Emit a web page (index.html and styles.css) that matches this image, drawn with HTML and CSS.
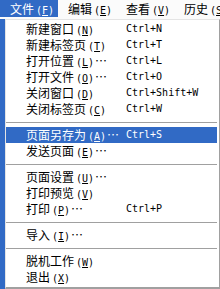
FILE: index.html
```html
<!DOCTYPE html>
<html>
<head>
<meta charset="utf-8">
<link rel="stylesheet" href="styles.css">
</head>
<body>
<div class="bar">
  <div class="top active">文件<span class="k">(<u>F</u>)</span></div>
  <div class="top">编辑<span class="k">(<u>E</u>)</span></div>
  <div class="top">查看<span class="k">(<u>V</u>)</span></div>
  <div class="top">历史<span class="k">(<u>S</u>)</span></div>
</div>
<div class="menu">
  <div class="item"><span class="lbl">新建窗口<span class="k">(<u>N</u>)</span></span><span class="sc">Ctrl+N</span></div>
  <div class="item"><span class="lbl">新建标签页<span class="k">(<u>T</u>)</span></span><span class="sc">Ctrl+T</span></div>
  <div class="item"><span class="lbl">打开位置<span class="k">(<u>L</u>)</span>…</span><span class="sc">Ctrl+L</span></div>
  <div class="item"><span class="lbl">打开文件<span class="k">(<u>O</u>)</span>…</span><span class="sc">Ctrl+O</span></div>
  <div class="item"><span class="lbl">关闭窗口<span class="k">(<u>D</u>)</span></span><span class="sc">Ctrl+Shift+W</span></div>
  <div class="item"><span class="lbl">关闭标签页<span class="k">(<u>C</u>)</span></span><span class="sc">Ctrl+W</span></div>
  <div class="sep"></div>
  <div class="item hl"><span class="lbl">页面另存为<span class="k">(<u>A</u>)</span>…</span><span class="sc">Ctrl+S</span></div>
  <div class="item"><span class="lbl">发送页面<span class="k">(<u>E</u>)</span>…</span></div>
  <div class="sep"></div>
  <div class="item"><span class="lbl">页面设置<span class="k">(<u>U</u>)</span>…</span></div>
  <div class="item"><span class="lbl">打印预览<span class="k">(<u>V</u>)</span></span></div>
  <div class="item"><span class="lbl">打印<span class="k">(<u>P</u>)</span>…</span><span class="sc">Ctrl+P</span></div>
  <div class="sep"></div>
  <div class="item"><span class="lbl">导入<span class="k">(<u>I</u>)</span>…</span></div>
  <div class="sep"></div>
  <div class="item"><span class="lbl">脱机工作<span class="k">(<u>W</u>)</span></span></div>
  <div class="item"><span class="lbl">退出<span class="k">(<u>X</u>)</span></span></div>
</div>
</body>
</html>
```
FILE: styles.css
```css
html, body {
  margin: 0;
  padding: 0;
}
body {
  width: 220px;
  height: 289px;
  overflow: hidden;
  background: #316ac5;
  font-family: "Noto Sans CJK SC", sans-serif;
  font-size: 12px;
  color: #000;
}
.bar {
  display: flex;
  height: 19px;
  background: #fbfbfb;
  white-space: nowrap;
  overflow: hidden;
}
.top {
  flex: none;
  height: 17px;
  line-height: 17px;
  padding: 0 5px 0 10px;
  width: 43px;
}
.top.active {
  background: #316ac5;
  color: #fff;
}
.k {
  font-family: "DejaVu Sans Mono", monospace;
  font-size: 10px;
  margin-left: 2px;
  margin-right: 1px;
}
.k u {
  text-underline-offset: 1px;
}
.menu {
  margin-left: 5px;
  width: 211px;
  background: #fff;
  border-left: 1px solid #e4e4e4;
  border-top: 1px solid #e4e4e4;
  border-right: 1px solid #a0a0a0;
  border-bottom: 2px solid #a0a0a0;
  padding: 1px 2px 2px 0;
}
.item {
  display: flex;
  height: 16px;
  line-height: 16px;
  padding-left: 20px;
  white-space: nowrap;
}
.item.hl {
  background: #316ac5;
  color: #fff;
}
.lbl {
  flex: none;
  width: 100px;
}
.sc {
  font-family: "DejaVu Sans Mono", monospace;
  font-size: 10px;
}
.sep {
  height: 5px;
  border-bottom: 1px solid #a0a0a0;
  margin-bottom: 4px;
}
```
